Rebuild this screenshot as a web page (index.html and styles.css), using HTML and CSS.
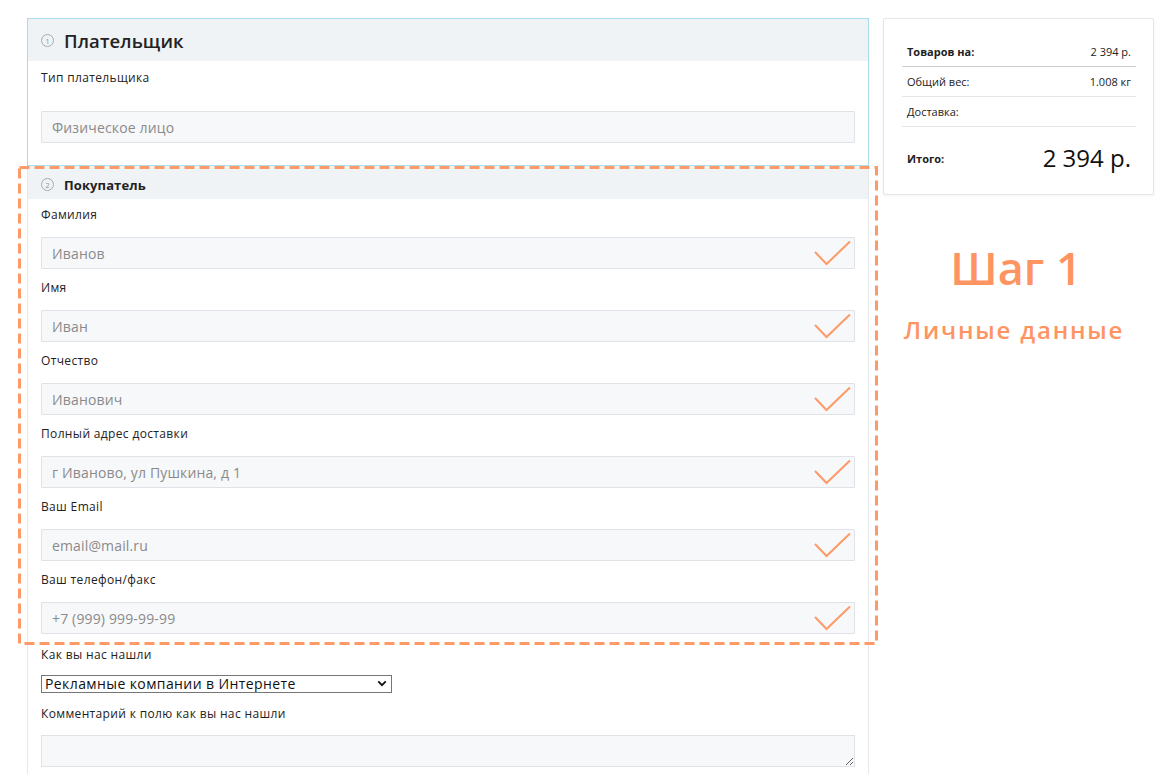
FILE: index.html
```html
<!DOCTYPE html>
<html lang="ru">
<head>
<meta charset="utf-8">
<title>Оформление заказа</title>
<link rel="stylesheet" href="styles.css">
</head>
<body>
<div class="page">
  <main class="order">
    <section class="block block--active">
      <header class="block-head block-head--lg">
        <span class="num">1</span>
        <h2 class="block-title block-title--lg">Плательщик</h2>
      </header>
      <div class="block-body block-body--payer">
        <div class="field">
          <label class="field-label">Тип плательщика</label>
          <input class="input input--type" value="Физическое лицо" readonly>
        </div>
      </div>
    </section>

    <div class="callout">
      <section class="block">
        <header class="block-head block-head--sm">
          <span class="num">2</span>
          <h3 class="block-title">Покупатель</h3>
        </header>
        <div class="block-body block-body--buyer">
          <div class="field">
            <label class="field-label">Фамилия</label>
            <div class="input-wrap"><input class="input" value="Иванов" readonly><svg class="check" viewBox="0 0 37 26"><polyline points="1,12 12.5,24 36,1.5"/></svg></div>
          </div>
          <div class="field">
            <label class="field-label">Имя</label>
            <div class="input-wrap"><input class="input" value="Иван" readonly><svg class="check" viewBox="0 0 37 26"><polyline points="1,12 12.5,24 36,1.5"/></svg></div>
          </div>
          <div class="field">
            <label class="field-label">Отчество</label>
            <div class="input-wrap"><input class="input" value="Иванович" readonly><svg class="check" viewBox="0 0 37 26"><polyline points="1,12 12.5,24 36,1.5"/></svg></div>
          </div>
          <div class="field">
            <label class="field-label">Полный адрес доставки</label>
            <div class="input-wrap"><input class="input" value="г Иваново, ул Пушкина, д 1" readonly><svg class="check" viewBox="0 0 37 26"><polyline points="1,12 12.5,24 36,1.5"/></svg></div>
          </div>
          <div class="field">
            <label class="field-label">Ваш Email</label>
            <div class="input-wrap"><input class="input" value="email@mail.ru" readonly><svg class="check" viewBox="0 0 37 26"><polyline points="1,12 12.5,24 36,1.5"/></svg></div>
          </div>
          <div class="field">
            <label class="field-label">Ваш телефон/факс</label>
            <div class="input-wrap"><input class="input" value="+7 (999) 999-99-99" readonly><svg class="check" viewBox="0 0 37 26"><polyline points="1,12 12.5,24 36,1.5"/></svg></div>
          </div>
        </div>
      </section>
      <svg class="callout-frame"><rect class="callout-rect"/></svg>
    </div>

    <section class="block block--rest">
      <div class="field field--select">
        <label class="field-label">Как вы нас нашли</label>
        <div class="select-wrap">
          <select class="select">
            <option>Рекламные компании в Интернете</option>
          </select>
          <svg class="select-arrow" viewBox="0 0 12 8"><polyline points="1.5,1.5 6,6 10.5,1.5"/></svg>
        </div>
      </div>
      <div class="field">
        <label class="field-label">Комментарий к полю как вы нас нашли</label>
        <textarea class="textarea"></textarea>
      </div>
    </section>
  </main>

  <aside class="side">
    <div class="summary">
      <div class="summary-row summary-row--strong">
        <span class="summary-name">Товаров на:</span>
        <span class="summary-value">2 394 р.</span>
      </div>
      <div class="summary-row">
        <span class="summary-name">Общий вес:</span>
        <span class="summary-value">1.008 кг</span>
      </div>
      <div class="summary-row">
        <span class="summary-name">Доставка:</span>
        <span class="summary-value"></span>
      </div>
      <div class="summary-total">
        <span class="summary-total-name">Итого:</span>
        <span class="summary-total-value">2 394 р.</span>
      </div>
    </div>
    <div class="step">
      <div class="step-title">Шаг 1</div>
      <div class="step-sub">Личные данные</div>
    </div>
  </aside>
</div>
</body>
</html>
```

FILE: styles.css
```css
* { box-sizing: border-box; }

html, body {
  margin: 0;
  padding: 0;
  background: #fff;
}

body {
  font-family: "Open Sans", "Noto Sans", sans-serif;
  color: #222;
  overflow: hidden;
}

.page {
  display: flex;
  align-items: flex-start;
  gap: 14px;
  padding: 18px 0 0 27px;
}

/* ---------- left column ---------- */
.order {
  width: 842px;
  flex: none;
}

.block {
  border-left: 1px solid #e6e8ea;
  border-right: 1px solid #e6e8ea;
  background: #fff;
}

.block--active {
  border: 1px solid #a9dbe8;
}

.block-head {
  display: flex;
  align-items: center;
  gap: 10px;
  background: #f0f3f6;
  padding: 0 12px 0 13px;
}

.block-head--lg {
  height: 42px;
}

.block-head--sm {
  height: 33px;
  padding-top: 4px;
}

.num {
  width: 13px;
  height: 13px;
  flex: none;
  border: 1px solid #a9a9a9;
  border-radius: 50%;
  color: #9a9a9a;
  font-size: 8px;
  line-height: 11px;
  text-align: center;
}

.block-title {
  margin: 0;
  font-size: 13px;
  font-weight: 700;
  color: #222;
  letter-spacing: 0.1px;
}

.block-title--lg {
  font-size: 18.5px;
  font-weight: 600;
  letter-spacing: 0.1px;
}

.block-body {
  padding: 0 13px;
}

.block-body--payer {
  padding-top: 9px;
  padding-bottom: 22px;
}

.block-body--payer .field-label {
  margin-bottom: 25px;
}

.block-body--buyer {
  padding-top: 8px;
  padding-bottom: 11px;
}

.field {
  display: flex;
  flex-direction: column;
}

.block-body--buyer .field + .field {
  margin-top: 11px;
}

.field-label {
  font-size: 12px;
  line-height: 16px;
  color: #222;
  margin-bottom: 14px;
  letter-spacing: 0.35px;
}

.input-wrap {
  position: relative;
}

.input {
  display: block;
  width: 100%;
  height: 32px;
  margin: 0;
  padding: 0 10px;
  border: 1px solid #dfe3e7;
  border-radius: 1px;
  background: #f7f8fa;
  font-family: inherit;
  font-size: 14px;
  color: #8a8a8a;
  letter-spacing: 0.15px;
  outline: none;
}

.check {
  position: absolute;
  right: 4px;
  top: 3px;
  width: 37px;
  height: 26px;
  fill: none;
  stroke: #fe9a68;
  stroke-width: 2;
}

/* dashed annotation frame */
.callout {
  position: relative;
}

.callout-frame {
  position: absolute;
  top: 0;
  left: -9px;
  width: calc(100% + 18px);
  height: 100%;
  overflow: visible;
  pointer-events: none;
}

.callout-rect {
  x: 1.5px;
  y: 1.5px;
  width: calc(100% - 3px);
  height: calc(100% - 3px);
  fill: none;
  stroke: #fe9a68;
  stroke-width: 3;
  stroke-dasharray: 10 5;
}

/* rest of the form */
.block--rest {
  padding: 2px 13px 20px;
}

.field--select {
  margin-bottom: 13px;
}

.field--select .field-label {
  margin-bottom: 12px;
}

.select-wrap {
  position: relative;
  width: 351px;
  height: 18px;
}

.select {
  -webkit-appearance: none;
  appearance: none;
  display: block;
  width: 351px;
  height: 18px;
  margin: 0;
  padding: 0 0 0 3px;
  border: 1px solid #767676;
  border-radius: 0;
  background: #fff;
  font-family: inherit;
  font-size: 14px;
  line-height: 16px;
  color: #111;
  letter-spacing: 0.4px;
}

.select-arrow {
  position: absolute;
  right: 5px;
  top: 5px;
  width: 10px;
  height: 7px;
  fill: none;
  stroke: #111;
  stroke-width: 2.2;
  pointer-events: none;
}

.textarea {
  display: block;
  width: 100%;
  height: 32px;
  margin: 0;
  border: 1px solid #dfe3e7;
  background: #f7f8fa;
  resize: vertical;
  font-family: inherit;
}

.field--select + .field .field-label {
  margin-bottom: 13px;
}

/* ---------- right column ---------- */
.side {
  width: 271px;
  flex: none;
}

.summary {
  border: 1px solid #e6e6e6;
  border-radius: 2px;
  box-shadow: 0 1px 3px rgba(0, 0, 0, 0.05);
  padding: 17px 17px 16px 18px;
  background: #fff;
}

.summary-row {
  display: flex;
  justify-content: space-between;
  align-items: center;
  height: 30px;
  padding: 0 5px 0 5px;
  border-bottom: 1px solid #e6e6e6;
  font-size: 11px;
  color: #222;
}

.summary-row--strong {
  height: 31px;
  border-bottom: 1px solid #cfcfcf;
}

.summary-row--strong .summary-name {
  font-weight: 700;
}

.summary-total {
  display: flex;
  justify-content: space-between;
  align-items: center;
  padding: 16px 5px 5px 5px;
  height: 51px;
}

.summary-total-name {
  font-size: 11px;
  font-weight: 700;
}

.summary-total-value {
  font-size: 24px;
  line-height: 30px;
  color: #111;
}

.step {
  text-align: center;
  color: #fe9462;
  padding-top: 46px;
}

.step-title {
  font-size: 45px;
  line-height: 54px;
  font-weight: 600;
  padding-right: 5px;
}

.step-sub {
  margin-top: 21px;
  font-size: 24px;
  line-height: 28px;
  font-weight: 600;
  letter-spacing: 1.8px;
  padding-right: 9px;
}
```
